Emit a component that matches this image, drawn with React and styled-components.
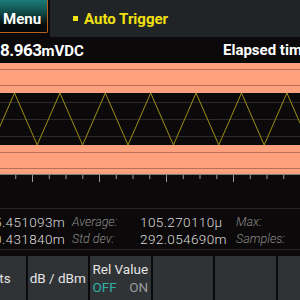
import React from "react";
import styled, { createGlobalStyle } from "styled-components";

const GlobalStyle = createGlobalStyle`
  html, body {
    margin: 0;
    padding: 0;
    background: #0b0909;
    font-family: Roboto, "Liberation Sans", sans-serif;
  }
`;

const Screen = styled.div`
  width: 300px;
  height: 300px;
  overflow: hidden;
  display: flex;
  flex-direction: column;
  background: #0b0909;
`;

const TopBar = styled.div`
  display: flex;
  height: 37px;
  gap: 2px;
  flex-shrink: 0;
`;

const MenuButton = styled.div`
  width: 60px;
  height: 33px;
  margin-left: -12px;
  box-sizing: border-box;
  border: 1.5px solid #b8601e;
  border-top: none;
  border-radius: 0 0 2px 0;
  background: linear-gradient(to bottom, #1c7c78 0%, #0f4846 40%, #040808 80%);
  display: flex;
  align-items: center;
  padding: 5px 0 0 14px;
  color: #ffffff;
  font-weight: 700;
  font-size: 15px;
`;

const TriggerPanel = styled.div`
  flex: 1;
  background: #202427;
  display: flex;
  align-items: center;
  gap: 6px;
  padding-left: 23px;
  color: #f0e010;
  font-weight: 700;
  font-size: 15px;
`;

const Dot = styled.span`
  width: 5px;
  height: 5px;
  background: #f2e414;
`;

const ReadingRow = styled.div`
  height: 25px;
  display: flex;
  align-items: center;
  justify-content: space-between;
  color: #ffffff;
  font-weight: 700;
  flex-shrink: 0;
  white-space: nowrap;
`;

const Value = styled.span`
  font-size: 17px;
  letter-spacing: -0.5px;
`;

const Unit = styled.span`
  font-size: 15px;
`;

const Elapsed = styled.span`
  font-size: 15px;
  margin-right: -10px;
`;

const Chart = styled.svg`
  display: block;
  flex-shrink: 0;
`;

const Spacer = styled.div`
  height: 26px;
  border-bottom: 1px solid #2a2626;
  flex-shrink: 0;
`;

const Stats = styled.div`
  display: grid;
  grid-template-columns: 78px 68px 96px 1fr;
  grid-auto-rows: 17px;
  align-items: center;
  margin-left: -6px;
  padding: 4px 0 2px;
  border-bottom: 1px solid #2a2626;
  white-space: nowrap;
  flex-shrink: 0;
`;

const Num = styled.span`
  color: #dcdcdc;
  font-weight: 300;
  font-size: 13.5px;
  letter-spacing: 0.4px;
`;

const Label = styled.span`
  color: #8c8c8c;
  font-style: italic;
  font-weight: 300;
  font-size: 12.5px;
`;

const SoftKeys = styled.div`
  display: flex;
  gap: 2px;
  margin-left: -35px;
  margin-top: 6px;
  height: 44px;
  flex-shrink: 0;
`;

const Key = styled.div`
  width: 60.5px;
  flex-shrink: 0;
  background: #303336;
  display: flex;
  align-items: center;
  justify-content: center;
  color: #e4e4e4;
  font-size: 13.5px;
  white-space: nowrap;
`;

const Toggle = styled.div`
  display: inline-flex;
  flex-direction: column;
  gap: 2px;
  margin-top: -1px;
`;

const ToggleRow = styled.div`
  display: flex;
  justify-content: space-between;
`;

const Opt = styled.span`
  color: ${(p) => (p.$on ? "#2fb0a4" : "#9a9a9a")};
`;

const SALMON = "#ffa17d";
const BAND_LINE = "#b8705c";

function wavePoints() {
  const period = 45.4;
  const half = period / 2;
  const pts = [];
  let x = 14.5 - period * 2;
  let top = true;
  while (x < 340) {
    pts.push(`${x.toFixed(1)},${top ? 31 : 83}`);
    x += half;
    top = !top;
  }
  return pts.join(" ");
}

function ticks() {
  const out = [];
  for (let k = -2; k < 20; k++) {
    const x = 32.5 + k * 16.75;
    if (x < 0 || x > 300) continue;
    const long = k % 4 === 0;
    out.push(
      <line key={k} x1={x} x2={x} y1={113} y2={long ? 120 : 117} stroke="#9a9a9a" strokeWidth="1" />
    );
  }
  return out;
}

const Trace = () => (
  <Chart width="300" height="120" viewBox="0 0 300 120">
    <rect x="0" y="1" width="300" height="30" fill={SALMON} />
    <line x1="0" x2="300" y1="7.5" y2="7.5" stroke={BAND_LINE} />
    <line x1="0" x2="300" y1="23.5" y2="23.5" stroke={BAND_LINE} />
    {[40.5, 57.5, 74.5].map((y) => (
      <line key={y} x1="0" x2="300" y1={y} y2={y} stroke="#2c2a2a" />
    ))}
    <rect x="0" y="83" width="300" height="29" fill={SALMON} />
    <line x1="0" x2="300" y1="90.5" y2="90.5" stroke={BAND_LINE} />
    <line x1="0" x2="300" y1="106.5" y2="106.5" stroke={BAND_LINE} />
    <polyline points={wavePoints()} fill="none" stroke="#9e9016" strokeWidth="1" />
    <line x1="0" x2="300" y1="112.5" y2="112.5" stroke="#7a7a7a" />
    {ticks()}
  </Chart>
);

export default function App() {
  return (
    <Screen>
      <GlobalStyle />
      <TopBar>
        <MenuButton>Menu</MenuButton>
        <TriggerPanel>
          <Dot />
          Auto Trigger
        </TriggerPanel>
      </TopBar>
      <ReadingRow>
        <span>
          <Value>8.963</Value>
          <Unit>mVDC</Unit>
        </span>
        <Elapsed>Elapsed time</Elapsed>
      </ReadingRow>
      <Trace />
      <Spacer />
      <Stats>
        <Num>5.451093m</Num>
        <Label>Average:</Label>
        <Num>105.270110µ</Num>
        <Label>Max:</Label>
        <Num>0.431840m</Num>
        <Label>Std dev:</Label>
        <Num>292.054690m</Num>
        <Label>Samples:</Label>
      </Stats>
      <SoftKeys>
        <Key>Units</Key>
        <Key>dB / dBm</Key>
        <Key>
          <Toggle>
            <span>Rel Value</span>
            <ToggleRow>
              <Opt $on>OFF</Opt>
              <Opt>ON</Opt>
            </ToggleRow>
          </Toggle>
        </Key>
        <Key />
        <Key />
        <Key />
      </SoftKeys>
    </Screen>
  );
}
